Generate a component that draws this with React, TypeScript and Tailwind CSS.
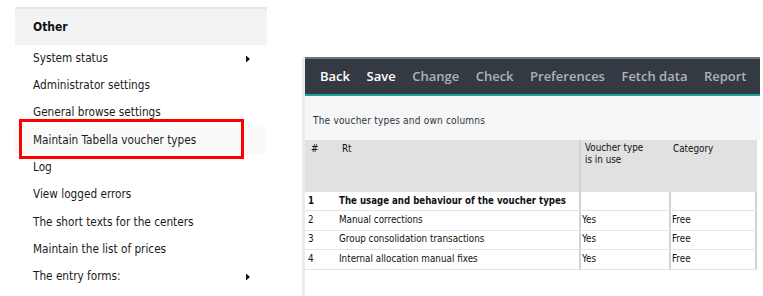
const items = [
  "System status",
  "Administrator settings",
  "General browse settings",
  "Maintain Tabella voucher types",
  "Log",
  "View logged errors",
  "The short texts for the centers",
  "Maintain the list of prices",
  "The entry forms:",
];

const tools = [
  { label: "Back", on: true },
  { label: "Save", on: true },
  { label: "Change", on: false },
  { label: "Check", on: false },
  { label: "Preferences", on: false },
  { label: "Fetch data", on: false },
  { label: "Report", on: false },
];

const rows = [
  { n: "1", rt: "The usage and behaviour of the voucher types", use: "", cat: "", bold: true },
  { n: "2", rt: "Manual corrections", use: "Yes", cat: "Free" },
  { n: "3", rt: "Group consolidation transactions", use: "Yes", cat: "Free" },
  { n: "4", rt: "Internal allocation manual fixes", use: "Yes", cat: "Free" },
];

function Arrow() {
  return (
    <svg width="4" height="7" viewBox="0 0 4 7" className="absolute left-[231px] top-1/2 -translate-y-1/2">
      <path d="M0 0 L4 3.5 L0 7 Z" fill="#111" />
    </svg>
  );
}

function SideMenu() {
  return (
    <div className="ml-[15px] mt-[7px] w-[252px] border-t-2 border-[#e6e6e6]">
      <div className="h-[36px] bg-[#f3f3f3] pl-[18px] flex items-center text-[12px] font-bold text-[#111]">
        Other
      </div>
      {items.map((label, i) => (
        <div
          key={i}
          className={
            "relative h-[27.3px] pl-[18px] flex items-center text-[11.7px] text-[#1a1a1a] whitespace-nowrap " +
            (i === 3 ? "bg-[#fafafa]" : "")
          }
        >
          {label}
          {(i === 0 || i === 8) && <Arrow />}
          {i === 3 && (
            <div className="absolute left-[4px] top-[-8px] w-[225px] h-[40px] border-[3px] border-[#ff0000]" />
          )}
        </div>
      ))}
    </div>
  );
}

function Panel() {
  return (
    <div className="mt-[57px] ml-[35px] w-[458px] border-l-[3px] border-[#ebebeb]">
      <div
        className="h-[39px] bg-[#343a41] border-t-2 border-[#6b737b] border-b-2 border-b-[#1aa39c] flex items-center pl-[15px] gap-[16.5px] text-[13px] font-semibold whitespace-nowrap"
        style={{ fontFamily: '"Open Sans", "Liberation Sans", sans-serif', fontStretch: "normal" }}
      >
        {tools.map((t) => (
          <span key={t.label} className={t.on ? "text-white" : "text-[#aeb2b6]"}>
            {t.label}
          </span>
        ))}
      </div>
      <div className="bg-[#f5f6f8] h-[44px] pl-[8px] pt-[17px] text-[10px] text-[#333] tracking-[0.2px]">
        The voucher types and own columns
      </div>
      <div className="w-[452px] text-[9.8px] text-[#111] whitespace-nowrap">
        <div className="flex h-[52px] bg-[#e1e1e0]">
          <div className="w-[31px] pl-[6px] pt-[2px]">#</div>
          <div className="w-[243px] pl-[6px] pt-[2px]">Rt</div>
          <div className="w-[90px] border-l-2 border-[#d2d2d2] pl-[4px] pt-[2px] leading-[12px]">
            Voucher type
            <br />
            is in use
          </div>
          <div className="flex-1 pl-[4px] pt-[2px]">Category</div>
        </div>
        {rows.map((r) => (
          <div
            key={r.n}
            className={
              "flex bg-white border-b border-[#e4e4e4] " +
              (r.bold ? "h-[19px] font-bold text-[9.6px]" : "h-[19.5px]")
            }
          >
            <div className="w-[31px] pl-[3px] flex items-center">{r.n}</div>
            <div className="w-[243px] pl-[3px] flex items-center">{r.rt}</div>
            <div className="w-[90px] border-l-2 border-[#d2d2d2] pl-[1px] flex items-center font-normal">
              {r.use}
            </div>
            <div className="flex-1 border-l-2 border-r-2 border-[#d2d2d2] pl-[1px] flex items-center font-normal">
              {r.cat}
            </div>
          </div>
        ))}
      </div>
    </div>
  );
}

export default function App() {
  return (
    <div
      className="w-[763px] h-[296px] bg-white flex overflow-hidden"
      style={{ fontFamily: '"DejaVu Sans Condensed", "Liberation Sans", sans-serif', fontStretch: "condensed" }}
    >
      <SideMenu />
      <Panel />
    </div>
  );
}
